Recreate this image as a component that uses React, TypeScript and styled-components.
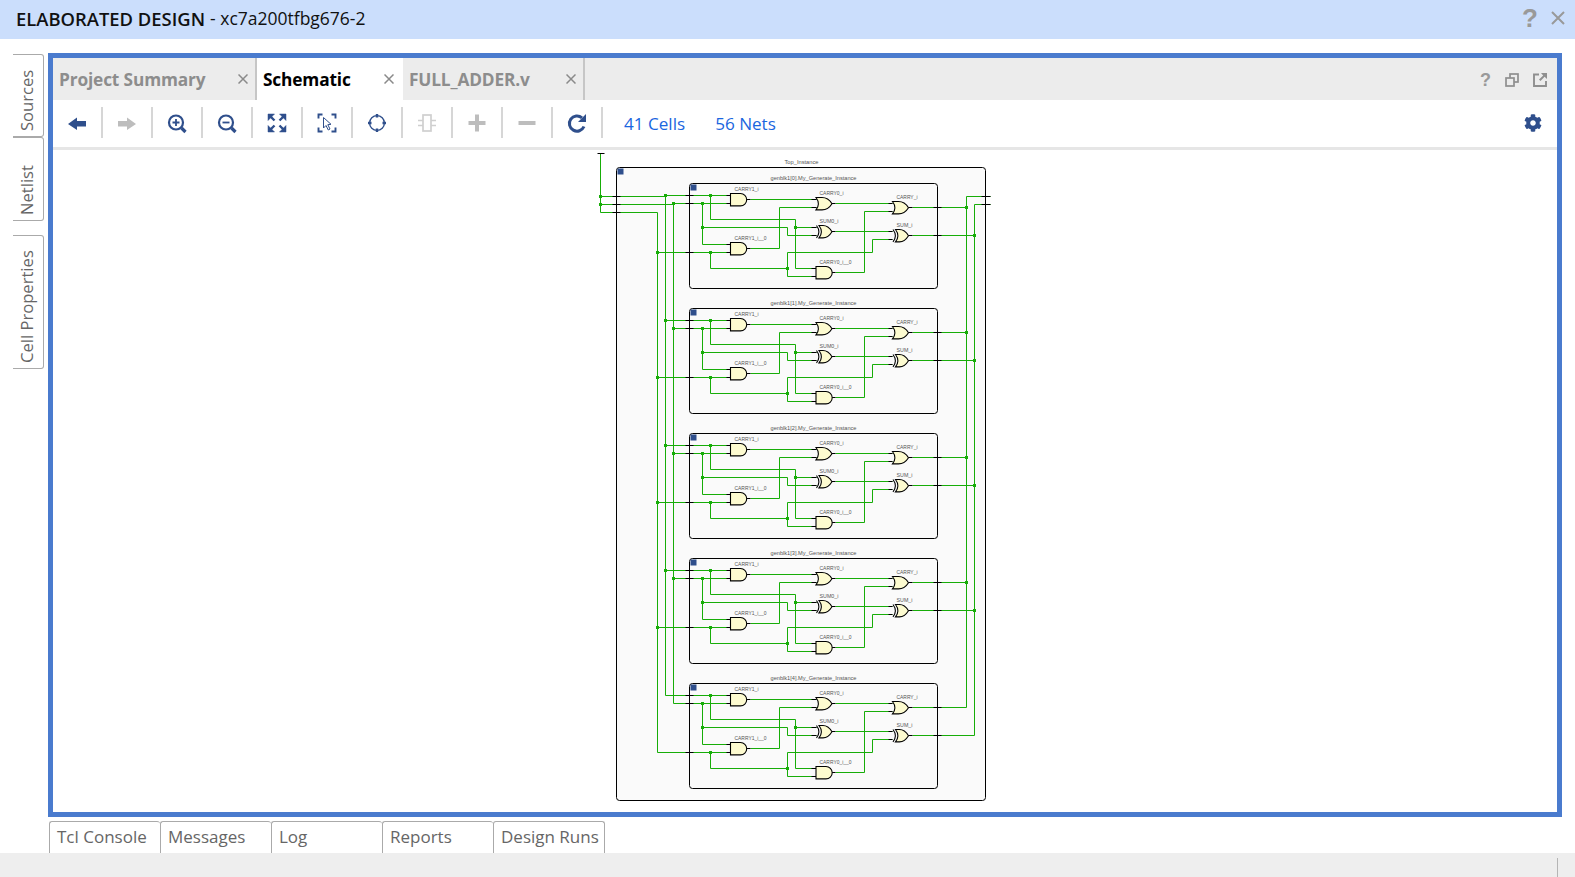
import React from 'react';
import styled, { createGlobalStyle } from 'styled-components';
import { FaCog } from 'react-icons/fa';

const UI = '"Open Sans", "Noto Sans", sans-serif';
const NAVY = '#2f4f8c';
const GREY = '#bdbdbd';
const WIRE = '#17ad08';

const Global = createGlobalStyle`
  html, body { margin: 0; padding: 0; background: #fff; overflow: hidden; }
  #root { height: 100vh; }
`;

const Page = styled.div`
  height: 100vh;
  display: flex;
  flex-direction: column;
  font-family: ${UI};
`;
const TitleBar = styled.header`
  height: 39px;
  flex: none;
  box-sizing: border-box;
  background: #cbdefc;
  display: flex;
  align-items: center;
  padding: 0 10px 3px 16px;
  color: #111;
  font-size: 17.5px;
`;
const TitleStrong = styled.b`
  font-weight: 600;
  font-size: 18.4px;
  margin-right: 5px;
`;
const Spacer = styled.div`
  flex: 1;
`;
const HelpMark = styled.span<{ $size: number }>`
  font-family: "Liberation Sans", sans-serif;
  font-weight: 700;
  font-size: ${p => p.$size}px;
  line-height: 1;
  color: #999;
`;
const TitleClose = styled.svg`
  margin-left: 13px;
  width: 14px;
  height: 14px;
`;
const Middle = styled.div`
  flex: 1;
  min-height: 0;
  display: flex;
  padding: 14px 13px 0 0;
`;
const Rail = styled.nav`
  width: 48px;
  flex: none;
  padding: 1px 0 0 13px;
  box-sizing: border-box;
  display: flex;
  flex-direction: column;
  align-items: flex-start;
`;
const RailTab = styled.div<{ $h: number; $gap?: number }>`
  width: 31px;
  height: ${p => p.$h}px;
  margin-top: ${p => p.$gap ?? 0}px;
  box-sizing: border-box;
  border: 1px solid #aaa;
  border-right: none;
  border-radius: 3px 0 0 3px;
  writing-mode: vertical-rl;
  transform: rotate(180deg);
  transform-origin: center;
  display: flex;
  align-items: center;
  padding: 5px 0 0 4px;
  font-size: 16.6px;
  color: #666;
`;
const Frame = styled.main`
  flex: 1;
  min-width: 0;
  border: 5px solid #4a7bce;
  display: flex;
  flex-direction: column;
`;
const TabBar = styled.div`
  height: 42px;
  flex: none;
  background: #ececec;
  display: flex;
  align-items: stretch;
`;
const DocTab = styled.div<{ $w: number; $active?: boolean; $sep?: boolean }>`
  width: ${p => p.$w}px;
  box-sizing: border-box;
  padding: 0 ${p => (p.$sep ? 7 : 9)}px 0 6px;
  display: flex;
  align-items: center;
  justify-content: space-between;
  background: ${p => (p.$active ? '#fff' : 'transparent')};
  color: ${p => (p.$active ? '#000' : '#8d8d8d')};
  border-right: ${p => (p.$sep ? '2px solid #c6c6c6' : 'none')};
  font-weight: 700;
  font-size: 17.3px;
  letter-spacing: -0.15px;
`;
const CloseX = styled.svg`
  width: 10px;
  height: 10px;
  flex: none;
`;
const PanelActions = styled.div`
  margin-left: auto;
  display: flex;
  align-items: center;
  gap: 14px;
  padding: 2px 10px 0 0;
`;
const SmallIcon = styled.svg`
  width: 14px;
  height: 14px;
`;
const Toolbar = styled.div`
  height: 47px;
  flex: none;
  box-sizing: border-box;
  background: #fff;
  display: flex;
  align-items: flex-start;
  padding-top: 7px;
`;
const ToolCell = styled.div`
  width: 48px;
  height: 31px;
  display: flex;
  align-items: center;
  justify-content: center;
  border-right: 2px solid #d6d6d6;
`;
const ToolIcon = styled.svg`
  width: 22px;
  height: 22px;
`;
const StatLink = styled.span<{ $left: number }>`
  margin-left: ${p => p.$left}px;
  color: #1a66e0;
  font-size: 17.1px;
  line-height: 33px;
`;
const GearWrap = styled.div`
  margin-left: auto;
  padding-right: 15px;
  height: 31px;
  display: flex;
  align-items: center;
  color: ${NAVY};
  font-size: 18px;
`;
const Rule = styled.div`
  height: 3px;
  flex: none;
  background: #e6e6e6;
`;
const Canvas = styled.div`
  flex: 1;
  min-height: 0;
  background: #fff;
`;
const Drawing = styled.svg`
  display: block;
  width: 1504px;
  height: 662px;
`;
const BottomTabs = styled.div`
  height: 32px;
  flex: none;
  margin-top: 4px;
  padding-left: 49px;
  display: flex;
`;
const BottomTab = styled.div`
  width: 111px;
  box-sizing: border-box;
  border: 1px solid #aaa;
  border-bottom: none;
  border-right: none;
  border-radius: 3px 3px 0 0;
  padding-left: 7px;
  font-size: 17px;
  line-height: 30px;
  color: #666;
  &:last-child { border-right: 1px solid #aaa; width: 112px; }
`;
const StatusBar = styled.footer`
  height: 24px;
  flex: none;
  background: #eee;
  display: flex;
  justify-content: flex-end;
  align-items: flex-end;
  padding-right: 17px;
`;
const StatusSep = styled.div`
  width: 1px;
  height: 19px;
  background: #b5b5b5;
`;

const Close = () => (
  <CloseX viewBox="0 0 10 10">
    <path d="M0.5 0.5L9.5 9.5M9.5 0.5L0.5 9.5" stroke="#8a8a8a" strokeWidth="1.5" fill="none" />
  </CloseX>
);

const Icon = ({ children }: { children: React.ReactNode }) => (
  <ToolCell>
    <ToolIcon viewBox="0 0 22 22">{children}</ToolIcon>
  </ToolCell>
);

const Arrow = ({ c, flip }: { c: string; flip?: boolean }) => (
  <path d={flip ? 'M2 9H11V5.5L20 12L11 18V14.5H2Z' : 'M20 9H11V5.5L2 12L11 18V14.5H20Z'} fill={c} />
);

const Magnifier = ({ plus }: { plus?: boolean }) => (
  <g fill="none" stroke={NAVY}>
    <circle cx="10" cy="10.5" r="7" strokeWidth="2.2" />
    <path d="M15.5 16L19.5 20" strokeWidth="3.2" />
    <path d={plus ? 'M6.5 10.5H13.5M10 7V14' : 'M6.5 10.5H13.5'} strokeWidth="1.8" />
  </g>
);

const FitArrows = () => (
  <g fill={NAVY} stroke={NAVY}>
    <path d="M2 2H8.5L2 8.5Z" strokeWidth="0.5" />
    <path d="M20 2H13.5L20 8.5Z" strokeWidth="0.5" />
    <path d="M2 20H8.5L2 13.5Z" strokeWidth="0.5" />
    <path d="M20 20H13.5L20 13.5Z" strokeWidth="0.5" />
    <path d="M4 4L8.5 8.5M18 4L13.5 8.5M4 18L8.5 13.5M18 18L13.5 13.5" strokeWidth="2.4" fill="none" />
  </g>
);

const SelectArea = () => (
  <g fill="none" stroke={NAVY}>
    <path d="M2.5 6.5V2.5H6.5M15.5 2.5H19.5V6.5M19.5 15.5V19.5H15.5M6.5 19.5H2.5V15.5" strokeWidth="1.9" />
    <path d="M7.5 5.5V16L10 13.5L12.3 18L14 17L11.8 12.7L15 12.3Z" strokeWidth="1" fill="#fff" />
  </g>
);

const Crosshair = () => (
  <g fill="none" stroke={NAVY}>
    <circle cx="11" cy="11" r="7.4" strokeWidth="1.4" />
    <path d="M11 2V5.5M11 16.5V20M2 11H5.5M16.5 11H20" strokeWidth="2.4" />
  </g>
);

const Chip = () => (
  <g fill="none" stroke="#cfcfcf" strokeWidth="1.7">
    <rect x="7" y="3" width="8" height="16" />
    <path d="M2 8.5H7M2 13.5H7M15 8.5H20M15 13.5H20" />
  </g>
);

const Refresh = () => (
  <g fill="none" stroke={NAVY}>
    <path d="M18 14.5A7.6 7.6 0 1 1 16 5.8" strokeWidth="3" />
    <path d="M20 2V10H12Z" fill={NAVY} stroke="none" />
  </g>
);

/* ---------- schematic ---------- */
const and = (x: number, y: number) =>
  `M${x} ${y}H${x + 10}A6.2 6.2 0 0 1 ${x + 10} ${y + 12.4}H${x}Z`;
const or = (x: number, y: number) =>
  `M${x} ${y}H${x + 6}C${x + 11} ${y} ${x + 14} ${y + 3} ${x + 16} ${y + 6.2}C${x + 14} ${y + 9.4} ${x + 11} ${y + 12.4} ${x + 6} ${y + 12.4}H${x}C${x + 3} ${y + 8.5} ${x + 3} ${y + 4} ${x} ${y}Z`;
const xor = (x: number, y: number) =>
  `M${x + 3} ${y}H${x + 7}C${x + 11} ${y} ${x + 14} ${y + 3} ${x + 16} ${y + 6.2}C${x + 14} ${y + 9.4} ${x + 11} ${y + 12.4} ${x + 7} ${y + 12.4}H${x + 3}C${x + 6} ${y + 8.5} ${x + 6} ${y + 4} ${x + 3} ${y}Z`;
const xorBack = (x: number, y: number) =>
  `M${x} ${y}C${x + 3} ${y + 4} ${x + 3} ${y + 8.5} ${x} ${y + 12.4}`;

const Label = ({ x, y, w, children }: { x: number; y: number; w: number; children: string }) => (
  <text
    x={x}
    y={y}
    textLength={w}
    lengthAdjust="spacingAndGlyphs"
    fontFamily="'Liberation Sans', sans-serif"
    fontSize="5.6"
    fill="#555"
  >
    {children}
  </text>
);

const Dot = ({ x, y }: { x: number; y: number }) => <rect x={x - 1.5} y={y - 1.5} width="3" height="3" fill={WIRE} />;

const Block = ({ i }: { i: number }) => {
  const dy = 125 * i;
  const last = i === 4;
  return (
    <g transform={`translate(0 ${dy})`}>
      <Label x={770} y={179} w={86}>{`genblk1[${i}].My_Generate_Instance`}</Label>
      <rect x="689" y="183" width="248" height="105" rx="3" fill="#fafafa" stroke="#000" />
      <rect x="690" y="184" width="6" height="6" fill={NAVY} />
      <path
        fill="none"
        stroke={WIRE}
        d={[
          'M665 195H730',
          'M673 203H730',
          'M657 252H730',
          'M702 203V244H730',
          'M702 227H787V235H816',
          'M710 195V219H795V268H816',
          'M795 227H816',
          'M710 252V268H787',
          'M787 252V276H816',
          'M787 252H872V239H892',
          'M750 199H816',
          'M750 248H779V207H816',
          'M835 203H892',
          'M835 231H892',
          'M835 272H864V211H892',
          'M912 207H966',
          'M912 235H974',
        ].join('')}
      />
      {!last && <Dot x={665} y={195} />}
      {!last && <Dot x={673} y={203} />}
      {!last && <Dot x={657} y={252} />}
      {!last && <Dot x={966} y={207} />}
      {!last && <Dot x={974} y={235} />}
      <Dot x={702} y={203} />
      <Dot x={710} y={195} />
      <Dot x={702} y={227} />
      <Dot x={710} y={252} />
      <Dot x={795} y={227} />
      <Dot x={787} y={268} />
      <path
        fill="none"
        stroke="#000"
        d={[
          'M685 195H693M685 203H693M685 252H693',
          'M933 207H941M933 235H941',
          'M726 195H730M726 203H730M726 244H730M726 252H730',
          'M746 199H750M746 248H750',
          'M811 199H816M811 207H816M811 227H816M811 235H816M811 268H816M811 276H816',
          'M831 203H835M831 231H835M831 272H835',
          'M888 203H892M888 211H892M888 231H892M888 239H892',
          'M908 207H912M908 235H912',
        ].join('')}
      />
      <g fill="#fdfbd0" stroke="#000" strokeWidth="1.1">
        <path d={and(730, 193)} />
        <path d={and(730, 242)} />
        <path d={or(815.5, 197)} />
        <path d={xor(815.5, 225)} />
        <path d={and(815.5, 266)} />
        <path d={or(892, 201)} />
        <path d={xor(892, 229)} />
        <path d={xorBack(816, 225)} fill="none" />
        <path d={xorBack(892.5, 229)} fill="none" />
      </g>
      <Label x={734} y={190} w={24}>CARRY1_i</Label>
      <Label x={734} y={239} w={32}>CARRY1_i__0</Label>
      <Label x={819} y={194} w={24}>CARRY0_i</Label>
      <Label x={819} y={222} w={19}>SUM0_i</Label>
      <Label x={819} y={263} w={32}>CARRY0_i__0</Label>
      <Label x={896} y={198} w={21}>CARRY_i</Label>
      <Label x={896} y={226} w={16}>SUM_i</Label>
    </g>
  );
};

const Schematic = () => (
  <Drawing viewBox="53 150 1504 662">
    <g transform="translate(0.5 0.5)">
      <Label x={784} y={163} w={34}>Top_Instance</Label>
      <rect x="616" y="167" width="369" height="633" rx="3" fill="#fafafa" stroke="#000" />
      <rect x="617" y="168" width="6" height="6" fill={NAVY} />
      <path
        fill="none"
        stroke={WIRE}
        d={[
          'M600 153V212H657V752',
          'M600 196H665V695',
          'M600 204H673V703',
          'M990 196H966V707',
          'M990 204H974V735',
        ].join('')}
      />
      <Dot x={600} y={196} />
      <Dot x={600} y={204} />
      <path
        fill="none"
        stroke="#000"
        d="M597 153H604M612 196H620M612 204H620M612 212H620M981 196H990M981 204H990"
      />
      {[0, 1, 2, 3, 4].map(i => (
        <Block key={i} i={i} />
      ))}
    </g>
  </Drawing>
);

export default function App() {
  return (
    <Page>
      <Global />
      <TitleBar>
        <TitleStrong>ELABORATED DESIGN</TitleStrong> - xc7a200tfbg676-2
        <Spacer />
        <HelpMark $size={26}>?</HelpMark>
        <TitleClose viewBox="0 0 14 14">
          <path d="M1 1L13 13M13 1L1 13" stroke="#999" strokeWidth="2" fill="none" />
        </TitleClose>
      </TitleBar>
      <Middle>
        <Rail>
          <RailTab $h={83}>Sources</RailTab>
          <RailTab $h={84}>Netlist</RailTab>
          <RailTab $h={134} $gap={14}>Cell Properties</RailTab>
        </Rail>
        <Frame>
          <TabBar>
            <DocTab $w={204} $sep>Project Summary<Close /></DocTab>
            <DocTab $w={146} $active>Schematic<Close /></DocTab>
            <DocTab $w={182} $sep>FULL_ADDER.v<Close /></DocTab>
            <PanelActions>
              <HelpMark $size={18}>?</HelpMark>
              <SmallIcon viewBox="0 0 14 14">
                <g fill="none" stroke="#8f8f8f" strokeWidth="1.7">
                  <rect x="5" y="1" width="8" height="8" />
                  <rect x="1" y="5" width="8" height="8" fill="#ececec" />
                </g>
              </SmallIcon>
              <SmallIcon viewBox="0 0 14 14">
                <path d="M6 1.5H1V13H13V8" fill="none" stroke="#8f8f8f" strokeWidth="1.9" />
                <path d="M14 0V6L11.6 3.8L7.5 8L6 6.4L10.2 2.4L8 0Z" fill="#8f8f8f" />
              </SmallIcon>
            </PanelActions>
          </TabBar>
          <Toolbar>
            <Icon><Arrow c={NAVY} /></Icon>
            <Icon><Arrow c={GREY} flip /></Icon>
            <Icon><Magnifier plus /></Icon>
            <Icon><Magnifier /></Icon>
            <Icon><FitArrows /></Icon>
            <Icon><SelectArea /></Icon>
            <Icon><Crosshair /></Icon>
            <Icon><Chip /></Icon>
            <Icon><path d="M11 2.5V19.5M2.5 11H19.5" stroke={GREY} strokeWidth="4" fill="none" /></Icon>
            <Icon><path d="M2.5 11H19.5" stroke={GREY} strokeWidth="4" fill="none" /></Icon>
            <Icon><Refresh /></Icon>
            <StatLink $left={21}>41 Cells</StatLink>
            <StatLink $left={30}>56 Nets</StatLink>
            <GearWrap><FaCog /></GearWrap>
          </Toolbar>
          <Rule />
          <Canvas><Schematic /></Canvas>
        </Frame>
      </Middle>
      <BottomTabs>
        <BottomTab>Tcl Console</BottomTab>
        <BottomTab>Messages</BottomTab>
        <BottomTab>Log</BottomTab>
        <BottomTab>Reports</BottomTab>
        <BottomTab>Design Runs</BottomTab>
      </BottomTabs>
      <StatusBar><StatusSep /></StatusBar>
    </Page>
  );
}
